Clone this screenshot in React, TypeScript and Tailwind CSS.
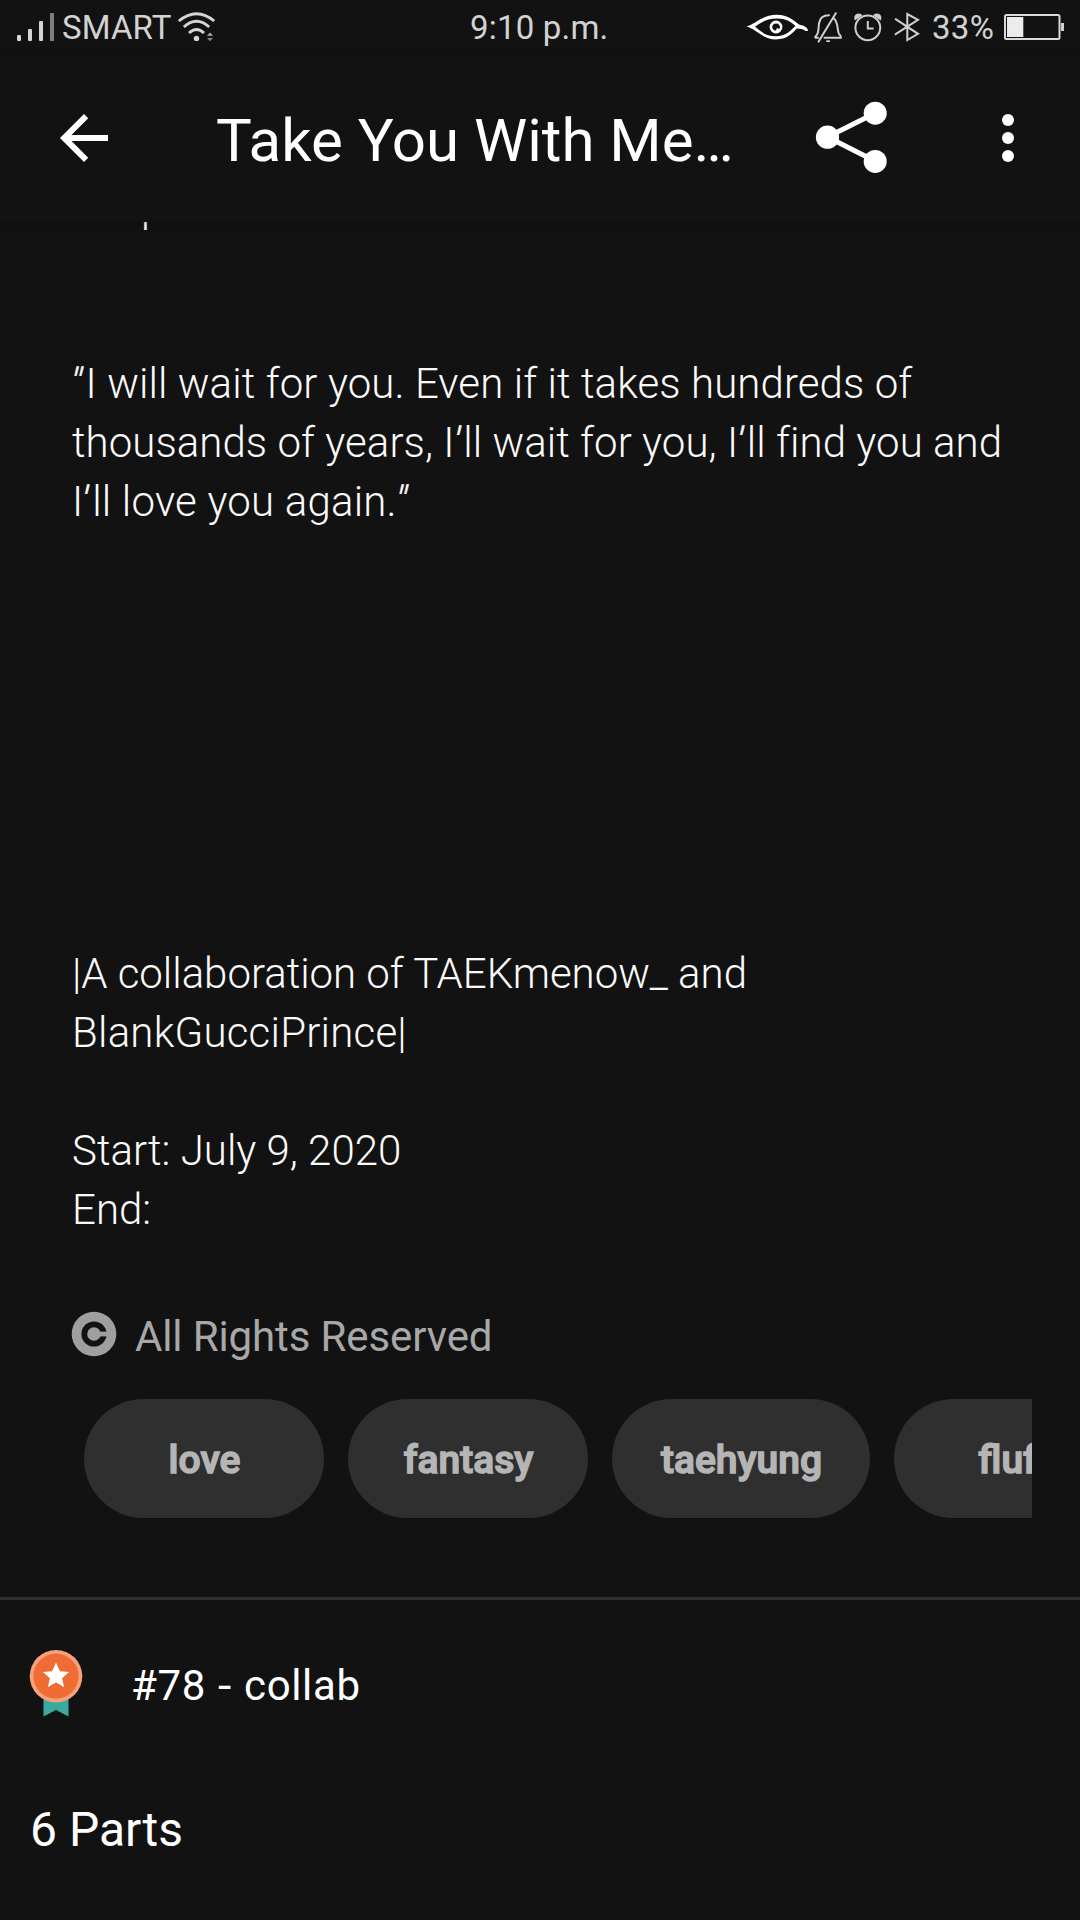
import React from "react";

const TAGS = [
  { label: "love", width: "w-[240px]" },
  { label: "fantasy", width: "w-[240px]" },
  { label: "taehyung", width: "w-[258px]" },
  { label: "fluff", width: "w-[240px]" },
];

function SignalIcon() {
  return (
    <svg className="ml-4 h-[55px] w-10 shrink-0" viewBox="16 0 40 55" fill="#d6d6d6">
      <rect x="17" y="35" width="4" height="6" rx="1" />
      <rect x="28" y="29" width="4" height="12" rx="1" />
      <rect x="39" y="21" width="4" height="20" rx="1" />
      <rect x="50" y="13" width="4" height="28" fill="#7d7d7d" />
    </svg>
  );
}

function WifiIcon() {
  return (
    <svg className="h-[55px] w-[41px] shrink-0" viewBox="176 0 41 55" fill="none" stroke="#d6d6d6" strokeWidth="2.8">
      <path d="M178.8 21Q196.5 6.4 214.2 21" />
      <path d="M183.8 27Q196.5 15.6 209.2 27" />
      <path d="M189 33Q196.5 26 204 33" />
      <circle cx="196.5" cy="38.4" r="2.7" fill="#d6d6d6" stroke="none" />
      <path d="M210 32.6l3 3.2h-6z" fill="#b0b0b0" stroke="none" />
      <path d="M207 38h6l-3 3.2z" fill="#858585" stroke="none" />
    </svg>
  );
}

function StatusIcons() {
  return (
    <svg className="h-[55px] w-[178px] shrink-0" viewBox="745 0 178 55" fill="none" stroke="#cfcfcf" strokeWidth="2" strokeLinecap="round" strokeLinejoin="round">
      <g stroke="none" fill="#ffffff">
        <path fillRule="evenodd" d="M746.5 26.5C755 24.5 762 14.8 777 14.8C788 14.8 793 20 799 24.6C803 25.8 807.5 26.3 808 31H805.5C803.5 29 800 29 796.8 28.6C791 34.5 787 39.4 776 39.4C763 39.4 757 29.5 746.5 26.5ZM755 26.6C761 31.8 766 36.2 776 36.2C786 36.2 790 31 795.5 26C790 21.5 786 18.6 777 18.6C766 18.6 761 23 755 26.6Z" />
        <path fillRule="evenodd" d="M776 20.6A6.4 6.4 0 1 0 776 33.4A6.4 6.4 0 1 0 776 20.6ZM776.5 23.6A3.5 3.5 0 0 1 779.4 29L776.8 28L776 30.5A3.5 3.5 0 1 1 776.5 23.6Z" />
      </g>
      <path d="M818 37.8H815.5C815 37 815.2 36.4 816.5 35.2C818.8 33 818.3 29 819 23.5C819.8 17.5 823.5 15.3 829 15.3M833.8 18.3C838.8 23 837 31 839 34C840.2 35.5 841.6 36.5 841 37.8H824.5M818.6 41.6L835.8 13.2" />
      <path d="M827 41.2H829.2" strokeWidth="1.8" />
      <circle cx="867.8" cy="27.8" r="12.4" />
      <path d="M867.8 21V28.6H873.6" strokeLinecap="butt" strokeLinejoin="miter" />
      <path d="M854.8 20.5Q853 15.5 857 13.8Q860.5 12.8 862.5 15.2ZM880.8 20.5Q882.6 15.5 878.6 13.8Q875 12.8 873 15.2Z" fill="#cfcfcf" stroke="none" />
      <path d="M895.6 19.2L918 33.8L907.3 40V14L918 19.8L895.6 34.2" strokeLinejoin="miter" />
    </svg>
  );
}

function BatteryIcon() {
  return (
    <svg className="h-[55px] w-[64px] shrink-0" viewBox="1002 0 64 55">
      <rect x="1005" y="15" width="54.5" height="24" rx="1.5" fill="none" stroke="#d9d9d9" strokeWidth="2" />
      <rect x="1007" y="17" width="16.3" height="20" fill="#ececec" />
      <rect x="1061" y="23" width="3" height="8" fill="#d0d0d0" />
    </svg>
  );
}

function StatusBar() {
  return (
    <div className="flex h-[55px] items-start text-[33px] leading-[55px] text-[#d2d2d2]">
      <SignalIcon />
      <span className="w-[120px] shrink-0 pl-[6px] tracking-[0.1px]">SMART</span>
      <WifiIcon />
      <span className="ml-[253px] w-[275px] shrink-0 tracking-[0.2px]">9:10 p.m.</span>
      <StatusIcons />
      <span className="w-[79px] shrink-0 pl-[9px] tracking-[0.3px]">33%</span>
      <BatteryIcon />
    </div>
  );
}

function Header() {
  return (
    <header className="relative z-10 flex h-[167px] items-start bg-[#121212] shadow-[0_1px_8px_rgba(0,0,0,0.25)]">
      <svg className="mt-[47px] ml-12 size-[72px] shrink-0" viewBox="0 0 24 24" fill="#fff">
        <path d="M20 11H7.83l5.59-5.59L12 4l-8 8 8 8 1.41-1.41L7.83 13H20v-2z" />
      </svg>
      <h1 className="mt-[50px] ml-[96px] w-[584px] shrink-0 text-[60px] leading-[72px] whitespace-nowrap text-white">Take You With Me…</h1>
      <svg className="mt-[38px] ml-3 h-[90px] w-[80px] shrink-0" viewBox="812 93 80 90" fill="#fff">
        <path d="M875.4 113L827.5 137L875.4 161.3" fill="none" stroke="#fff" strokeWidth="5" />
        <circle cx="827.5" cy="137.2" r="11.6" />
        <circle cx="875.2" cy="113.2" r="11.5" />
        <circle cx="875.2" cy="161.4" r="11.5" />
      </svg>
      <svg className="mt-[47px] ml-[80px] size-[72px] shrink-0" viewBox="0 0 72 72" fill="#fff">
        <circle cx="36" cy="18" r="6" />
        <circle cx="36" cy="36" r="6" />
        <circle cx="36" cy="54" r="6" />
      </svg>
    </header>
  );
}

/* Quotation marks lean slightly and carry a little extra room. */
function Quote({ children }: { children: string }) {
  return <span className="inline-block origin-[50%_35%] -skew-x-12 pr-[1.4px] [-webkit-text-stroke:0.5px_#fafafa]">{children}</span>;
}

function CopyrightIcon() {
  return (
    <svg className="size-[46px] shrink-0" viewBox="0 0 46 46">
      <circle cx="23" cy="23" r="22.3" fill="#9f9f9f" />
      <circle cx="23" cy="23" r="9.7" fill="none" stroke="#121212" strokeWidth="5.8" />
      <rect x="23" y="20.6" width="14" height="4.8" fill="#9f9f9f" />
    </svg>
  );
}

function AwardIcon() {
  return (
    <svg className="h-[68px] w-[54px] shrink-0" viewBox="29.5 1649 54 68">
      <path d="M44 1696H69V1716.4L56.5 1710L44 1716.4Z" fill="#3aa99e" />
      <circle cx="56.5" cy="1676.2" r="26.3" fill="#f5a17d" />
      <circle cx="56.5" cy="1676.2" r="22.6" fill="#f06c35" />
      <path d="M56.5 1662.5L60.4 1671.2L69.5 1672.1L62.6 1678.3L64.6 1687L56.5 1682.5L48.4 1687L50.4 1678.3L43.5 1672.1L52.6 1671.2Z" fill="#fff" />
    </svg>
  );
}

export default function App() {
  return (
    <div className="flex h-[1920px] w-[1080px] flex-col overflow-hidden bg-[#121212] font-[Roboto,sans-serif]">
      <StatusBar />
      <Header />
      <main className="flex flex-col">
        <div className="-mt-[45px] pl-[72px] text-[42px] leading-[59px] font-light whitespace-pre text-[#fafafa]">
          <p className="pl-[69px]">p</p>
          <p className="mt-[118px] tracking-[0.09px]"><Quote>"</Quote>I will wait for you. Even if it takes hundreds of</p>
          <p className="tracking-[0.05px]">thousands of years, I<Quote>'</Quote>ll wait for you, I<Quote>'</Quote>ll find you and</p>
          <p className="tracking-[0.2px]">I<Quote>'</Quote>ll love you again.<Quote>"</Quote></p>
          <p className="mt-[413px] tracking-[-0.03px]">|A collaboration of TAEKmenow_ and</p>
          <p className="tracking-[0.22px]">BlankGucciPrince|</p>
          <p className="mt-[59px]">Start: July 9, 2020</p>
          <p>End:</p>
        </div>
        <div className="mt-[72px] flex h-[46px] items-center pl-[71px]">
          <CopyrightIcon />
          <span className="mt-[5px] ml-[18px] text-[42px] leading-[50px] tracking-[-0.12px] text-[#a8a8a8]">All Rights Reserved</span>
        </div>
        <div className="mt-[42px] mr-12 ml-[84px] flex h-[119px] gap-6 overflow-hidden">
          {TAGS.map((tag) => (
            <span key={tag.label} className={`${tag.width} flex h-[119px] shrink-0 items-center justify-center rounded-full bg-[#2f2f2f] pt-[4px] pl-px text-[39px] font-medium text-[#b5b5b5] [-webkit-text-stroke:1.5px_#b5b5b5]`}>
              {tag.label}
            </span>
          ))}
        </div>
        <div className="mt-[79px] h-[3px] bg-[#2f2f2f]" />
        <div className="mt-[49px] flex h-[68px] items-start pl-[29px]">
          <AwardIcon />
          <span className="mt-[12px] ml-[48px] text-[42px] leading-[50px] tracking-[0.65px] text-white">
            #78 <span className="inline-block scale-x-115 px-[1.8px]">-</span> collab
          </span>
        </div>
        <h2 className="mt-[85px] pl-[30px] text-[48px] leading-[56px] text-white">6 Parts</h2>
      </main>
    </div>
  );
}
